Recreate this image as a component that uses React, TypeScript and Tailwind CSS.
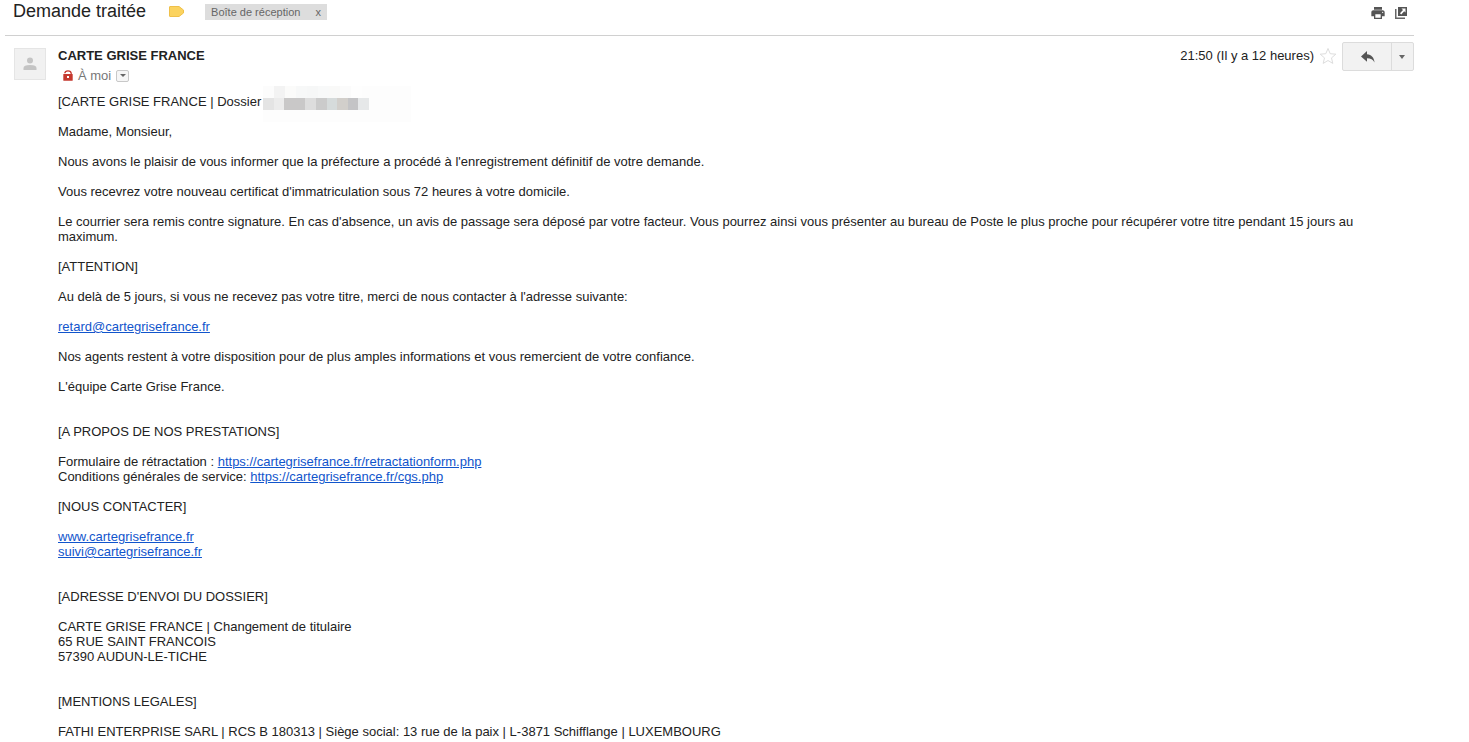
const pixelTop = ['#fcfcfc', '#f3f3f3', '#fbfbfa', '#f7f8f8', '#f6f7f7', '#f8f9f9', '#f9f9f8', '#fbfbfb', '#fefefe'];
const pixelBottom = ['#e4e4e4', '#ececec', '#c9c8c8', '#c9c8c8', '#dddddd', '#cbcbcb', '#d6dbdb', '#d2cfcb', '#c4c4c6', '#e6e8e9'];

function Link({ children }: { children: React.ReactNode }) {
  return <a className="text-[#1155cc] underline">{children}</a>;
}

export default function App() {
  return (
    <div className="h-[742px] w-[1469px] overflow-hidden bg-white font-['Liberation_Sans',Arial,sans-serif] text-[13px] leading-[15px] text-[#222222]">
      <div className="ml-[5px] flex h-[36px] w-[1409px] items-start border-b border-[#d0d0d0]">
        <h1 className="ml-2 mt-[-1px] text-[18px] leading-[24px] text-[#222222]">Demande traitée</h1>
        <svg className="ml-[23px] mt-[6px]" width="15" height="11" viewBox="0 0 15 11">
          <path d="M1 0.5H10L14.5 4V7L10 10.5H1Q0.5 10.5 0.5 10V1Q0.5 0.5 1 0.5Z" fill="#fbd35f" stroke="#efc04a" />
        </svg>
        <div className="ml-[21px] mt-1 flex h-4 w-[122px] items-center justify-between bg-[#dddddd] pl-[6px] pr-[6px] text-[11px] text-[#666666]">
          <span>Boîte de réception</span>
          <span>x</span>
        </div>
        <div className="ml-auto mr-[7px] mt-[7px] flex items-start gap-[10px]">
          <svg width="14" height="12" viewBox="2 3 20 18" fill="#555555">
            <path d="M19 8H5c-1.66 0-3 1.34-3 3v6h4v4h12v-4h4v-6c0-1.66-1.34-3-3-3zm-3 11H8v-5h8v5zm3-7c-.55 0-1-.45-1-1s.45-1 1-1 1 .45 1 1-.45 1-1 1zm-1-9H6v4h12V3z" />
          </svg>
          <svg width="12" height="12" viewBox="0 0 12 12">
            <path d="M0 2H1.5V10.5H10V12H0Z" fill="#666666" />
            <path d="M3 0H12V9H3Z" fill="#555555" />
            <path d="M6.5 1.5H10.5V5.5L9.2 4.2L6.2 7.4L5 6.2L8 3L6.5 1.5Z" fill="#ffffff" />
          </svg>
        </div>
      </div>

      <div className="ml-[14px] mt-3 flex w-[1400px] items-start">
        <div className="flex h-8 w-8 items-center justify-center border border-[#e5e5e5] bg-[#f1f1f1]">
          <svg width="14" height="14" viewBox="0 0 14 14" fill="#c4c4c4">
            <circle cx="7" cy="3.5" r="3" />
            <path d="M0.5 13V11Q0.5 8 7 8Q13.5 8 13.5 11V13Z" />
          </svg>
        </div>
        <div className="ml-3">
          <div className="font-bold leading-[15px]">CARTE GRISE FRANCE</div>
          <div className="mt-[5px] flex items-center pl-[5px] text-[#777777]">
            <svg width="10" height="11" viewBox="0 0 10 11">
              <path d="M1.8 3.2Q2 0.8 5 0.8Q8 0.8 8.2 3.2V4.5" fill="none" stroke="#c5392f" strokeWidth="1.3" />
              <rect x="0.3" y="4" width="9.4" height="6.8" rx="0.5" fill="#c5392f" />
              <rect x="4" y="6" width="2" height="2" fill="#ffffff" />
            </svg>
            <span className="ml-[5px]">À moi</span>
            <div className="ml-[5px] flex h-[12px] w-[13px] items-center justify-center rounded-[2px] border border-[#c8c8c8] bg-[#f6f6f6]">
              <div className="h-0 w-0 border-x-[3.5px] border-t-[3px] border-x-transparent border-t-[#666666]" />
            </div>
          </div>
        </div>
        <div className="ml-auto flex items-start">
          <span>21:50 (Il y a 12 heures)</span>
          <svg className="ml-[5px] mt-[-1px]" width="18" height="18" viewBox="0 0 18 18">
            <path d="M9 1.5L11.2 6.7L16.8 7.2L12.5 10.9L13.8 16.4L9 13.5L4.2 16.4L5.5 10.9L1.2 7.2L6.8 6.7Z" fill="none" stroke="#dddddd" />
          </svg>
          <div className="ml-[5px] mt-[-6px] flex h-[29px] w-[72px] rounded-[2px] border border-[#dcdcdc] bg-[#f2f2f2]">
            <div className="flex w-[49px] items-center justify-center border-r border-[#dcdcdc]">
              <svg className="ml-[1px]" width="14" height="12" viewBox="0 0 14 12" fill="#555555">
                <path d="M6 0V3.2C10.5 3.6 13 6.5 13.5 11.5C12 8.5 9.8 7.2 6 7.2V10.8L0 5.4Z" />
              </svg>
            </div>
            <div className="flex flex-1 items-center justify-center pr-[2px]">
              <div className="h-0 w-0 border-x-[3.5px] border-t-[4px] border-x-transparent border-t-[#666666]" />
            </div>
          </div>
        </div>
      </div>

      <div className="ml-[58px] mt-[11px] w-[1310px]">
        <p className="relative">
          [CARTE GRISE FRANCE | Dossier
          <span className="absolute left-[205px] top-[-8px] h-[36px] w-[148px] bg-[#fdfdfd]" />
          <span className="absolute left-[205px] top-[-8px] flex">
            {pixelTop.map((color, i) => (
              <span key={i} className="h-3 w-[11px]" style={{ backgroundColor: color }} />
            ))}
          </span>
          <span className="absolute left-[205px] top-[4px] flex">
            {pixelBottom.map((color, i) => (
              <span key={i} className="h-3 w-[10.6px]" style={{ backgroundColor: color }} />
            ))}
          </span>
        </p>
        <p className="mt-[15px]">Madame, Monsieur,</p>
        <p className="mt-[15px]">Nous avons le plaisir de vous informer que la préfecture a procédé à l'enregistrement définitif de votre demande.</p>
        <p className="mt-[15px]">Vous recevrez votre nouveau certificat d'immatriculation sous 72 heures à votre domicile.</p>
        <p className="mt-[15px]">
          Le courrier sera remis contre signature. En cas d'absence, un avis de passage sera déposé par votre facteur. Vous pourrez ainsi vous présenter au bureau de Poste le plus proche pour récupérer votre titre pendant 15 jours au maximum.
        </p>
        <p className="mt-[15px]">[ATTENTION]</p>
        <p className="mt-[15px]">Au delà de 5 jours, si vous ne recevez pas votre titre, merci de nous contacter à l'adresse suivante:</p>
        <p className="mt-[15px]"><Link>retard@cartegrisefrance.fr</Link></p>
        <p className="mt-[15px]">Nos agents restent à votre disposition pour de plus amples informations et vous remercient de votre confiance.</p>
        <p className="mt-[15px]">L'équipe Carte Grise France.</p>
        <p className="mt-[30px]">[A PROPOS DE NOS PRESTATIONS]</p>
        <p className="mt-[15px]">
          Formulaire de rétractation : <Link>https://cartegrisefrance.fr/retractationform.php</Link>
          <br />
          Conditions générales de service: <Link>https://cartegrisefrance.fr/cgs.php</Link>
        </p>
        <p className="mt-[15px]">[NOUS CONTACTER]</p>
        <p className="mt-[15px]">
          <Link>www.cartegrisefrance.fr</Link>
          <br />
          <Link>suivi@cartegrisefrance.fr</Link>
        </p>
        <p className="mt-[30px]">[ADRESSE D'ENVOI DU DOSSIER]</p>
        <p className="mt-[15px]">
          CARTE GRISE FRANCE | Changement de titulaire
          <br />
          65 RUE SAINT FRANCOIS
          <br />
          57390 AUDUN-LE-TICHE
        </p>
        <p className="mt-[30px]">[MENTIONS LEGALES]</p>
        <p className="mt-[15px]">FATHI ENTERPRISE SARL | RCS B 180313 | Siège social: 13 rue de la paix | L-3871 Schifflange | LUXEMBOURG</p>
      </div>
    </div>
  );
}
